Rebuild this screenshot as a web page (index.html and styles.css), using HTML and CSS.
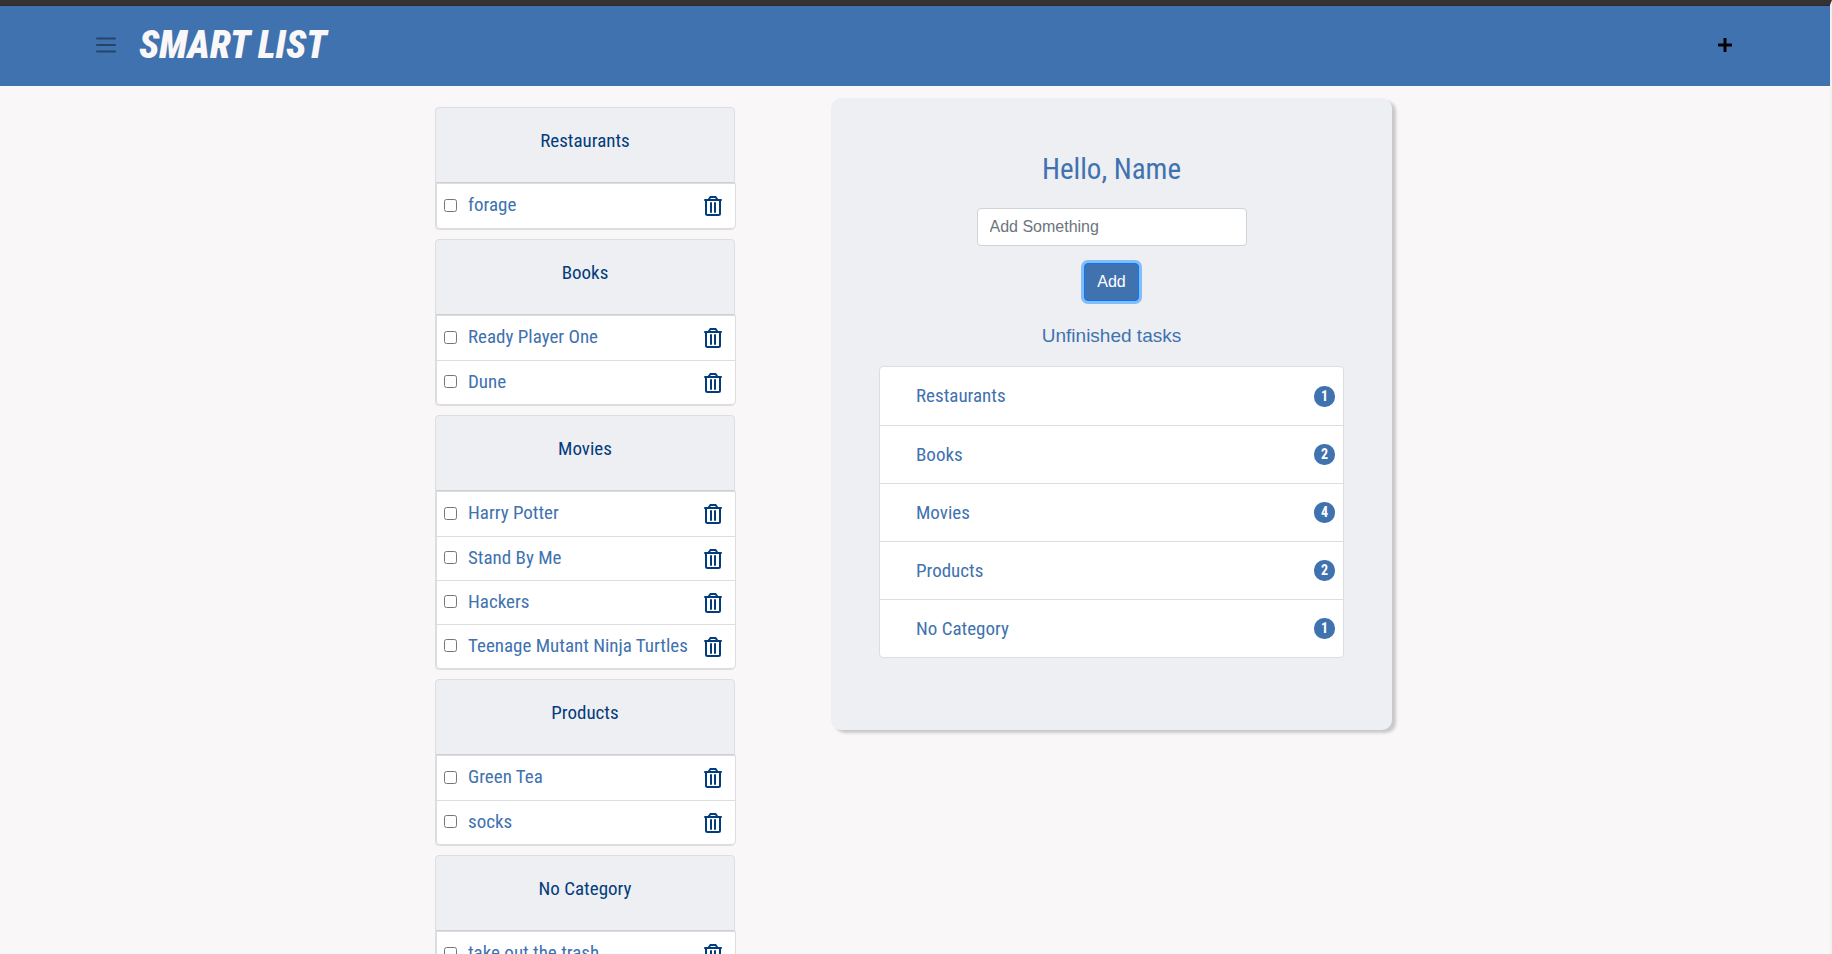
FILE: index.html
```html
<!DOCTYPE html>
<html lang="en">
<head>
<meta charset="utf-8">
<title>Smart List</title>
<link rel="stylesheet" href="styles.css">
</head>
<body>
<svg class="sprite" aria-hidden="true">
  <symbol id="trash" viewBox="0 0 18 20">
    <path d="M1 4h16M5 4V3l1.500-2h5L13 3v1M2 4v13.500a1.500 1.500 0 0 0 1.500 1.500h11a1.500 1.500 0 0 0 1.500-1.500V4M7 7v9M11 7v9" fill="none" stroke="currentColor" stroke-width="2" stroke-linecap="round"/>
  </symbol>
</svg>
<header class="navbar">
  <button class="icon-button" type="button" aria-label="Menu">
    <svg width="20" height="16" viewBox="0 0 20 16"><path d="M1 1.500h18M1 8h18M1 14.500h18" stroke="currentColor" stroke-width="2" stroke-linecap="round"/></svg>
  </button>
  <a class="brand" href="#">SMART LIST</a>
  <button class="icon-button icon-button-add" type="button" aria-label="Add item">
    <svg width="14" height="14" viewBox="0 0 14 14"><path d="M7 1v12M1 7h12" stroke="currentColor" stroke-width="3" stroke-linecap="round"/></svg>
  </button>
</header>
<main class="content">
  <div class="lists">
    <section class="card">
      <h2 class="card-title">Restaurants</h2>
      <ul class="items">
        <li class="item"><label class="item-label"><input class="check" type="checkbox">forage</label><button class="delete" type="button" aria-label="Delete forage"><svg class="trash"><use href="#trash"/></svg></button></li>
      </ul>
    </section>
    <section class="card">
      <h2 class="card-title">Books</h2>
      <ul class="items">
        <li class="item"><label class="item-label"><input class="check" type="checkbox">Ready Player One</label><button class="delete" type="button" aria-label="Delete Ready Player One"><svg class="trash"><use href="#trash"/></svg></button></li>
        <li class="item"><label class="item-label"><input class="check" type="checkbox">Dune</label><button class="delete" type="button" aria-label="Delete Dune"><svg class="trash"><use href="#trash"/></svg></button></li>
      </ul>
    </section>
    <section class="card">
      <h2 class="card-title">Movies</h2>
      <ul class="items">
        <li class="item"><label class="item-label"><input class="check" type="checkbox">Harry Potter</label><button class="delete" type="button" aria-label="Delete Harry Potter"><svg class="trash"><use href="#trash"/></svg></button></li>
        <li class="item"><label class="item-label"><input class="check" type="checkbox">Stand By Me</label><button class="delete" type="button" aria-label="Delete Stand By Me"><svg class="trash"><use href="#trash"/></svg></button></li>
        <li class="item"><label class="item-label"><input class="check" type="checkbox">Hackers</label><button class="delete" type="button" aria-label="Delete Hackers"><svg class="trash"><use href="#trash"/></svg></button></li>
        <li class="item"><label class="item-label"><input class="check" type="checkbox">Teenage Mutant Ninja Turtles</label><button class="delete" type="button" aria-label="Delete Teenage Mutant Ninja Turtles"><svg class="trash"><use href="#trash"/></svg></button></li>
      </ul>
    </section>
    <section class="card">
      <h2 class="card-title">Products</h2>
      <ul class="items">
        <li class="item"><label class="item-label"><input class="check" type="checkbox">Green Tea</label><button class="delete" type="button" aria-label="Delete Green Tea"><svg class="trash"><use href="#trash"/></svg></button></li>
        <li class="item"><label class="item-label"><input class="check" type="checkbox">socks</label><button class="delete" type="button" aria-label="Delete socks"><svg class="trash"><use href="#trash"/></svg></button></li>
      </ul>
    </section>
    <section class="card">
      <h2 class="card-title">No Category</h2>
      <ul class="items">
        <li class="item"><label class="item-label"><input class="check" type="checkbox">take out the trash</label><button class="delete" type="button" aria-label="Delete take out the trash"><svg class="trash"><use href="#trash"/></svg></button></li>
      </ul>
    </section>
  </div>
  <section class="panel">
    <h1 class="greeting">Hello, Name</h1>
    <form class="add-form">
      <input class="add-input" type="text" placeholder="Add Something" aria-label="Add Something">
      <button class="add-button" type="button">Add</button>
    </form>
    <h2 class="summary-title">Unfinished tasks</h2>
    <ul class="summary">
      <li class="summary-row">Restaurants<span class="badge">1</span></li>
      <li class="summary-row">Books<span class="badge">2</span></li>
      <li class="summary-row">Movies<span class="badge">4</span></li>
      <li class="summary-row">Products<span class="badge">2</span></li>
      <li class="summary-row">No Category<span class="badge">1</span></li>
    </ul>
  </section>
</main>
</body>
</html>
```
FILE: styles.css
```css
:root {
  --blue: #4072af;
  --navy: #033c7b;
  --line: #dcdddf;
  --mist: #eeeff3;
  --condensed: "Roboto Condensed", "Liberation Sans Narrow", Roboto, sans-serif;
}

* { box-sizing: border-box; }

html { scrollbar-width: none; }

body {
  margin: 0;
  min-height: 100vh;
  border-top: 5px solid #333;
  border-right: 2px solid #f1f1f1;
  background: #f9f7f8;
  color: var(--blue);
  font: 16px/24px "Liberation Sans", Arial, sans-serif;
}

h1, h2, ul { margin: 0; padding: 0; font-weight: 400; }
ul { list-style: none; }
button { font: inherit; cursor: pointer; }

.sprite { display: none; }

.navbar {
  display: flex;
  align-items: center;
  height: 81px;
  padding: 0 98px 2px 96px;
  border-top: 1px solid #2b2b30;
  background: var(--blue);
}

.icon-button {
  display: flex;
  padding: 0;
  border: 0;
  background: none;
  color: #264468;
}

.icon-button-add { margin-left: auto; color: #000; }

.brand {
  margin-left: 23px;
  color: #f9f7f8;
  font: italic 900 38px/48px var(--condensed);
  text-decoration: none;
}

.content {
  display: flex;
  justify-content: center;
  align-items: flex-start;
  gap: 96px;
  padding: 12px 19px 12px 16px;
}

.lists {
  display: flex;
  flex-direction: column;
  gap: 9px;
  width: 300px;
  padding-top: 9px;
  font: 19px/24px var(--condensed);
}

.card {
  border: 1px solid var(--line);
  border-radius: 4px;
  background: var(--mist);
}

.card-title {
  height: 75px;
  padding-top: 21px;
  border-bottom: 1px solid #cfd1d6;
  color: var(--navy);
  font-size: 19px;
  line-height: 24px;
  text-align: center;
}

.items {
  margin-right: -2px;
  border: 1px solid var(--line);
  border-radius: 0 0 4px 4px;
  background: #fff;
}

.item {
  display: flex;
  align-items: center;
  justify-content: space-between;
  height: 44px;
  padding: 0 13px 0 7px;
}

.item + .item { border-top: 1px solid var(--line); }

.item-label { display: flex; align-items: center; padding-bottom: 2px; white-space: nowrap; }
.check { width: 13px; height: 13px; margin: 0 11px 0 0; }
.delete { display: flex; padding: 0; border: 0; background: none; color: var(--navy); }
.trash { width: 18px; height: 20px; }

.panel {
  flex: 0 1 561px;
  padding: 53px 48px 72px;
  border-radius: 10px;
  background: var(--mist);
  box-shadow: 4px 3px 3px #c9c9cb;
  text-align: center;
}

.greeting { font: 29px/36px var(--condensed); }

.add-form {
  display: flex;
  flex-direction: column;
  align-items: center;
  gap: 17px;
  margin-top: 21px;
}

.add-input {
  width: 270px;
  height: 38px;
  padding: 0 12px;
  border: 1px solid #ced4da;
  border-radius: 4px;
  background: #fff;
  font: inherit;
}

.add-input::placeholder { color: #6c757d; }

.add-button {
  height: 38px;
  padding: 0 12px;
  border: 1px solid #007bff;
  border-radius: 4px;
  background: var(--blue);
  box-shadow: 0 0 0 3px #85bbf7;
  color: #fff;
}

.summary-title { margin: 23px 0 18px; font-size: 19px; line-height: 24px; }

.summary {
  border: 1px solid var(--line);
  border-radius: 4px;
  background: #fff;
  font: 19px/24px var(--condensed);
}

.summary-row {
  display: flex;
  align-items: center;
  justify-content: space-between;
  height: 58px;
  padding: 0 8px 0 36px;
}

.summary-row + .summary-row { border-top: 1px solid var(--line); }

.badge {
  padding: 0 7px;
  border-radius: 10px;
  background: var(--blue);
  color: #fff;
  font-size: 14px;
  font-weight: 700;
  line-height: 21px;
}
```
